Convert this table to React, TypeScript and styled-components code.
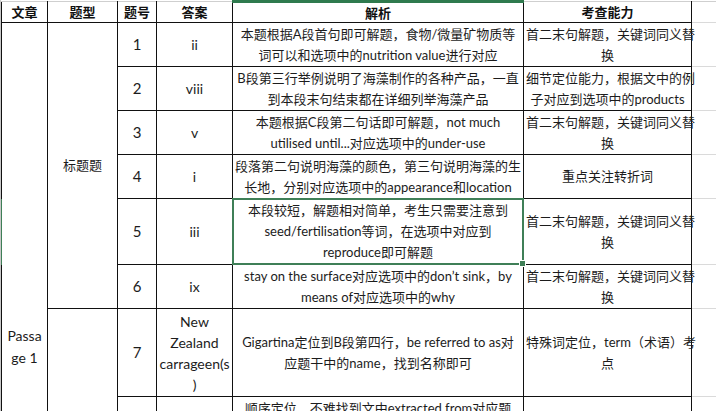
import styled, { createGlobalStyle } from 'styled-components'

const GlobalStyle = createGlobalStyle`
  html, body {
    margin: 0;
    padding: 0;
    background: #fff;
  }
  body {
    font-family: Lato, "Noto Sans CJK SC", sans-serif;
    color: #1a1a1a;
  }
`

type Row = {
  num?: string
  answer: string[]
  analysis: string[]
  ability: string[]
  h: number
  selected?: boolean
}

const rows: Row[] = [
  {
    num: '1',
    answer: ['ii'],
    analysis: ['本题根据A段首句即可解题，食物/微量矿物质等', '词可以和选项中的nutrition value进行对应'],
    ability: ['首二末句解题，关键词同义替', '换'],
    h: 44,
  },
  {
    num: '2',
    answer: ['viii'],
    analysis: ['B段第三行举例说明了海藻制作的各种产品，一直', '到本段末句结束都在详细列举海藻产品'],
    ability: ['细节定位能力，根据文中的例', '子对应到选项中的products'],
    h: 44,
  },
  {
    num: '3',
    answer: ['v'],
    analysis: ['本题根据C段第二句话即可解题，not much', 'utilised until...对应选项中的under-use'],
    ability: ['首二末句解题，关键词同义替', '换'],
    h: 44,
  },
  {
    num: '4',
    answer: ['i'],
    analysis: ['段落第二句说明海藻的颜色，第三句说明海藻的生', '长地，分别对应选项中的appearance和location'],
    ability: ['重点关注转折词'],
    h: 44,
  },
  {
    num: '5',
    answer: ['iii'],
    analysis: ['本段较短，解题相对简单，考生只需要注意到', 'seed/fertilisation等词，在选项中对应到', 'reproduce即可解题'],
    ability: ['首二末句解题，关键词同义替', '换'],
    h: 66,
    selected: true,
  },
  {
    num: '6',
    answer: ['ix'],
    analysis: ['stay on the surface对应选项中的don\u2019t sink，by', 'means of对应选项中的why'],
    ability: ['首二末句解题，关键词同义替', '换'],
    h: 44,
  },
  {
    num: '7',
    answer: ['New', 'Zealand', 'carrageen(s', ')'],
    analysis: ['Gigartina定位到B段第四行，be referred to as对', '应题干中的name，找到名称即可'],
    ability: ['特殊词定位，term（术语）考', '点'],
    h: 88,
  },
  {
    num: '8',
    answer: ['ii'],
    analysis: ['顺序定位，不难找到文中extracted from对应题', '干中的taken from，再结合后文的描述', '即可确定答案'],
    ability: ['顺序定位，关键词同义替换'],
    h: 66,
  },
]

const Sheet = styled.div`
  position: relative;
  width: 716px;
  height: 411px;
  overflow: hidden;
  border-left: 1px solid #c8c8c8;
  box-sizing: border-box;
`

const RowMark = styled.span`
  position: absolute;
  left: -1px;
  top: 199px;
  width: 2px;
  height: 66px;
  background: #3f7f57;
`

const Table = styled.table`
  border-collapse: collapse;
  table-layout: fixed;
  width: 716px;
`

const HeadRow = styled.tr`
  height: 21px;
`

const Th = styled.th<{ $green?: boolean }>`
  padding: 0;
  font-family: "Noto Sans CJK SC", sans-serif;
  font-size: 13px;
  font-weight: 700;
  line-height: 18px;
  text-align: center;
  color: #111;
  border: 1px solid #111;
  border-top: ${(p) => (p.$green ? '3px solid #2f7a4e' : '1px solid #cfcfcf')};
`

const BodyRow = styled.tr<{ $h: number }>`
  height: ${(p) => p.$h}px;
`

const Td = styled.td<{ $size?: number }>`
  position: relative;
  padding: 0 2px;
  font-size: ${(p) => p.$size ?? 13}px;
  line-height: 21px;
  text-align: center;
  vertical-align: middle;
  white-space: nowrap;
  color: #1c1c1c;
  border: 1px solid #111;
`

const PassageCell = styled(Td)`
  vertical-align: top;
  padding-top: 302px;
  font-size: 14px;
  line-height: 22px;
`

const Selected = styled.span`
  position: absolute;
  inset: -1px;
  border: 2px solid #3f7f57;
  pointer-events: none;

  &::after {
    content: '';
    position: absolute;
    right: -4px;
    bottom: -4px;
    width: 5px;
    height: 5px;
    background: #3f7f57;
    border: 1px solid #fff;
  }
`

const Spare = styled.td`
  padding: 0;
  border-top: 1px solid #dadada;
  border-bottom: 1px solid #dadada;
  border-left: 1px solid #111;
`

const SpareHead = styled.th`
  padding: 0;
  border-top: 1px solid #cfcfcf;
  border-bottom: 1px solid #dadada;
  border-left: 1px solid #111;
`

const Lines = ({ lines }: { lines: string[] }) => (
  <>
    {lines.map((l, i) => (
      <div key={i}>{l}</div>
    ))}
  </>
)

const App = () => {
  return (
    <>
      <GlobalStyle />
      <Sheet>
        <Table>
          <colgroup>
            <col style={{ width: 46 }} />
            <col style={{ width: 70 }} />
            <col style={{ width: 39 }} />
            <col style={{ width: 76 }} />
            <col style={{ width: 291 }} />
            <col style={{ width: 168 }} />
            <col style={{ width: 26 }} />
          </colgroup>
          <thead>
            <HeadRow>
              <Th>文章</Th>
              <Th>题型</Th>
              <Th>题号</Th>
              <Th>答案</Th>
              <Th $green>解析</Th>
              <Th>考查能力</Th>
              <SpareHead />
            </HeadRow>
          </thead>
          <tbody>
            {rows.map((r, i) => (
              <BodyRow key={i} $h={r.h}>
                {i === 0 && (
                  <PassageCell rowSpan={rows.length}>
                    Passa
                    <br />
                    ge 1
                  </PassageCell>
                )}
                {i === 0 && <Td rowSpan={6}>标题题</Td>}
                {i === 6 && <Td rowSpan={2} />}
                <Td $size={15}>{r.num}</Td>
                <Td $size={14}>
                  <Lines lines={r.answer} />
                </Td>
                <Td>
                  <Lines lines={r.analysis} />
                  {r.selected && <Selected />}
                </Td>
                <Td>
                  <Lines lines={r.ability} />
                </Td>
                <Spare />
              </BodyRow>
            ))}
          </tbody>
        </Table>
        <RowMark />
      </Sheet>
    </>
  )
}

export default App
